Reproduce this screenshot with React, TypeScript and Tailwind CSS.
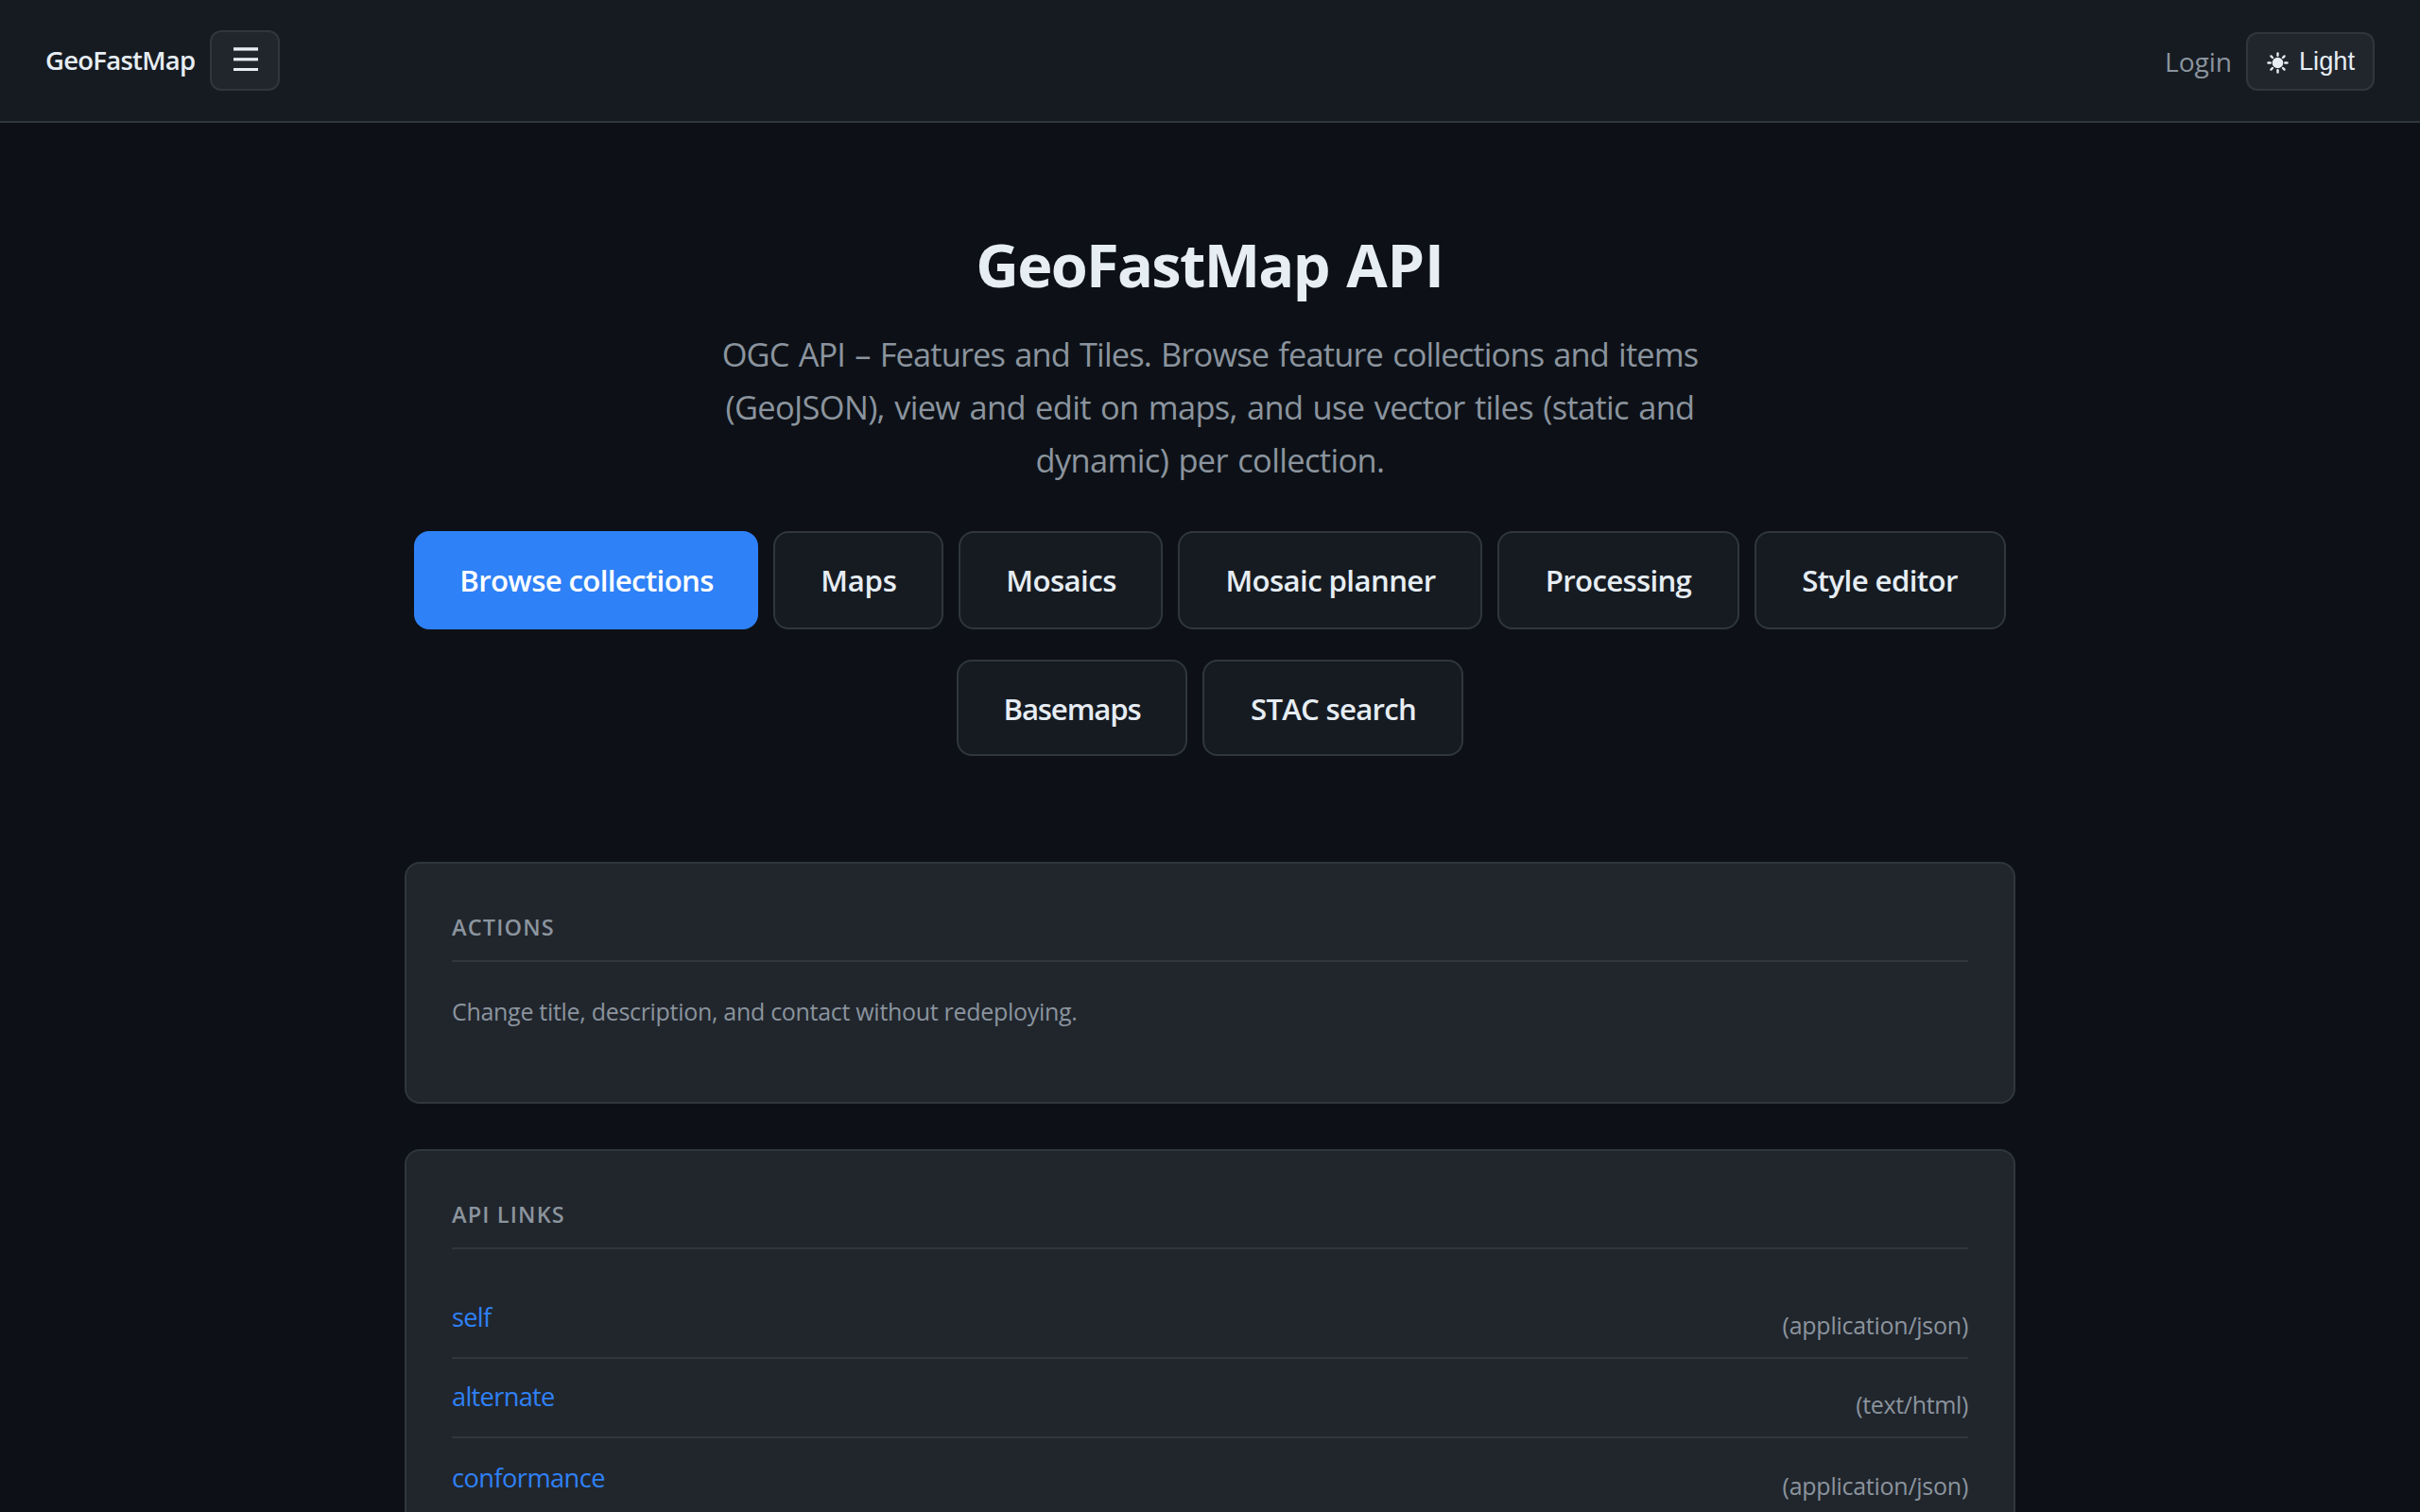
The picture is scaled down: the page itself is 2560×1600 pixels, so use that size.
import React from "react";

function SunIcon() {
  const rays = [0, 45, 90, 135, 180, 225, 270, 315];
  return (
    <svg className="mt-[3px] h-[23px] w-[23px] shrink-0" viewBox="-11.5 -11.5 23 23" fill="currentColor">
      <circle r="5.8" />
      {rays.map((a) => (
        <line
          key={a}
          x1="0"
          y1="-7.8"
          x2="0"
          y2="-10"
          stroke="currentColor"
          strokeWidth="2.4"
          strokeLinecap="round"
          transform={`rotate(${a})`}
        />
      ))}
    </svg>
  );
}

function MenuIcon() {
  return (
    <svg className="mb-[3px] ml-px h-[26px] w-[26px]" viewBox="0 0 26 26" fill="currentColor">
      <rect y="0.2" width="26" height="3.4" />
      <rect y="11.2" width="26" height="3.2" />
      <rect y="22" width="26" height="3" />
    </svg>
  );
}

function Header() {
  return (
    <header className="flex h-[130px] items-center justify-between border-b-2 border-[#30363d] bg-[#161b22] px-12">
      <div className="flex h-full items-center">
        <a className="w-[174px] text-[27.5px] leading-10 font-semibold tracking-[-0.75px] whitespace-nowrap">
          GeoFastMap
        </a>
        <button className="flex h-16 w-[74px] items-center justify-center rounded-xl border-2 border-[#30363d] bg-[#21262d]">
          <MenuIcon />
        </button>
      </div>
      <div className="flex h-full items-center gap-[15px] pt-[2px]">
        <a className="text-[28.2px] leading-10 tracking-[-0.1px] text-[#8b949e]">Login</a>
        <button className="flex h-[62px] w-[136px] items-center gap-[11px] rounded-xl border-2 border-[#30363d] bg-[#21262d] pb-px pl-5 font-['Liberation_Sans',Arial,sans-serif] text-[27.2px] leading-10">
          <SunIcon />
          Light
        </button>
      </div>
    </header>
  );
}

const primaryNav = [
  { label: "Browse collections", cls: "w-[364px] pl-px tracking-[-0.65px] bg-[#2f81f7] border-[#2f81f7] text-white" },
  { label: "Maps", cls: "w-[180px] pl-px tracking-[-0.2px] bg-[#161b22] border-[#30363d]" },
  { label: "Mosaics", cls: "w-[216px] pl-px tracking-[-0.55px] bg-[#161b22] border-[#30363d]" },
  { label: "Mosaic planner", cls: "w-[322px] pl-px tracking-[-0.6px] bg-[#161b22] border-[#30363d]" },
  { label: "Processing", cls: "w-[256px] tracking-[-0.7px] bg-[#161b22] border-[#30363d]" },
  { label: "Style editor", cls: "w-[266px] pr-px tracking-[-0.6px] bg-[#161b22] border-[#30363d]" },
];

const secondaryNav = [
  { label: "Basemaps", cls: "w-[244px] tracking-[-1.15px] bg-[#161b22] border-[#30363d]" },
  { label: "STAC search", cls: "w-[276px] pl-px tracking-[-0.75px] bg-[#161b22] border-[#30363d]" },
];

function NavButton({ label, cls, height }: { label: string; cls: string; height: string }) {
  return (
    <a
      className={`flex shrink-0 items-center justify-center rounded-2xl border-2 text-[31.2px] font-semibold whitespace-nowrap ${height} ${cls}`}
    >
      {label}
    </a>
  );
}

function Hero() {
  return (
    <section className="flex flex-col items-center pt-[110px]">
      <h1 className="text-[63px] leading-[80px] font-bold whitespace-nowrap">
        <span className="tracking-[-1.67px]">GeoFastMap</span>
        <span className="tracking-[-0.1px] [word-spacing:2px]"> API</span>
      </h1>
      <p className="mt-[27px] flex flex-col items-center text-[34.4px] leading-[56px] whitespace-nowrap text-[#8b949e]">
        <span className="tracking-[-0.85px] [word-spacing:2px]">
          OGC API – Features and Tiles. Browse feature collections and items
        </span>
        <span className="tracking-[-0.66px] [word-spacing:2px]">
          (GeoJSON), view and edit on maps, and use vector tiles (static and
        </span>
        <span className="tracking-[-0.63px] [word-spacing:2px]">dynamic) per collection.</span>
      </p>
      <nav className="mt-[47px] flex flex-col items-center gap-8">
        <div className="flex gap-4">
          {primaryNav.map((n) => (
            <NavButton key={n.label} {...n} height="h-[104px]" />
          ))}
        </div>
        <div className="flex gap-4">
          {secondaryNav.map((n) => (
            <NavButton key={n.label} {...n} height="h-[102px] pt-[2px]" />
          ))}
        </div>
      </nav>
    </section>
  );
}

function Card({ title, className, children }: { title: string; className: string; children: React.ReactNode }) {
  return (
    <section className={`rounded-2xl border-2 border-[#30363d] bg-[#21262d] p-12 ${className}`}>
      <h2 className="border-b-2 border-[#30363d] pb-4 text-[23.5px] leading-[38px] font-semibold tracking-[1.15px] text-[#8b949e]">
        {title}
      </h2>
      <div className="mt-8">{children}</div>
    </section>
  );
}

const links = [
  { rel: "self", type: "(application/json)", row: "h-[84px] pt-4", relCls: "tracking-[-0.7px]", typeCls: "tracking-[-0.26px]" },
  { rel: "alternate", type: "(text/html)", row: "h-[84px] pt-4", relCls: "tracking-[-0.68px]", typeCls: "tracking-[-0.35px]" },
  { rel: "conformance", type: "(application/json)", row: "h-[86px] pt-[18px]", relCls: "tracking-[-0.54px]", typeCls: "tracking-[-0.26px]" },
];

export default function App() {
  return (
    <div className="h-[1600px] w-[2560px] overflow-hidden bg-[#0d1117] font-['Open_Sans',sans-serif] text-[#e6edf3]">
      <Header />
      <main>
        <Hero />
        <div className="mx-auto mt-28 flex w-[1704px] flex-col gap-12">
          <Card title="ACTIONS" className="h-64">
            <p className="text-[25px] leading-10 tracking-[-0.3px] text-[#8b949e]">
              Change title, description, and contact without redeploying.
            </p>
          </Card>
          <Card title="API LINKS" className="h-[480px]">
            <ul>
              {links.map((l) => (
                <li
                  key={l.rel}
                  className={`flex items-start justify-between border-b-2 border-[#30363d] ${l.row}`}
                >
                  <a className={`text-[27.2px] leading-[48px] text-[#2f81f7] ${l.relCls}`}>{l.rel}</a>
                  <span className={`pt-3 text-[25px] leading-10 text-[#8b949e] ${l.typeCls}`}>{l.type}</span>
                </li>
              ))}
            </ul>
          </Card>
        </div>
      </main>
    </div>
  );
}
